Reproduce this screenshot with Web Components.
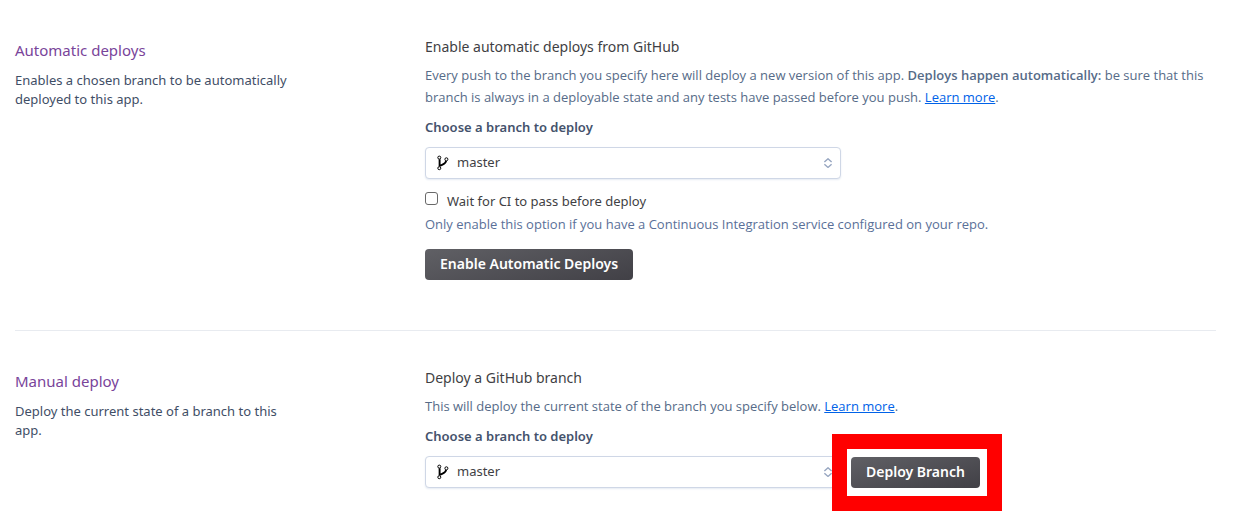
<!DOCTYPE html>
<html lang="en">
<head>
<meta charset="utf-8">
<title>Deploy</title>
<style>
  body { margin: 0; background: #fff; font-family: "Noto Sans", "Open Sans", sans-serif; font-size: 13px; color: #3f3f44; }
</style>
</head>
<body>
<deploy-page></deploy-page>

<script>
const define = (name, html) => {
  const template = document.createElement('template');
  template.innerHTML = html.trim();
  customElements.define(name, class extends HTMLElement {
    constructor() {
      super();
      this.attachShadow({ mode: 'open' }).append(template.content.cloneNode(true));
    }
  });
};

/* Two-column settings row: title and description on the left, controls on the right. */
define('deploy-section', `
  <style>
    :host { display: grid; grid-template-columns: minmax(0, 280px) minmax(0, 1fr); column-gap: 130px; padding: 36px 0 24px; }
    h2 { margin: 4px 0 11px; font-size: 15px; line-height: 20px; font-weight: 400; color: #79449a; }
    .about { font-size: 13px; line-height: 19px; color: #3f4e66; }
    h3 { margin: 0 0 6px; font-size: 14px; line-height: 22px; font-weight: 400; color: #3f3f44; }
    .body { font-size: 13px; line-height: 22px; color: #566b88; }
  </style>
  <aside><h2><slot name="title"></slot></h2><div class="about"><slot name="about"></slot></div></aside>
  <div><h3><slot name="heading"></slot></h3><div class="body"><slot></slot></div></div>
`);

define('text-link', `
  <style>
    :host { display: inline; }
    a { color: #0062e8; text-decoration: underline; }
  </style><a href="#"><slot></slot></a>
`);

define('branch-picker', `
  <style>
    :host { display: block; width: 416px; max-width: 100%; }
    label { display: block; margin-bottom: 9px; line-height: 22px; font-weight: 600; color: #44526c; }
    .field { position: relative; }
    select { display: block; box-sizing: border-box; width: 100%; height: 32px; margin: 0; padding: 0 30px 2px 31px;
      appearance: none; background: #fff; border: 1px solid #cfd7e6; border-radius: 4px;
      box-shadow: 0 1px 2px #e6ebf3; font: inherit; color: #3f3f44; }
    svg { position: absolute; pointer-events: none; fill: none; }
    .branch { left: 12px; top: 8px; }
    .arrows { right: 8px; top: 11px; }
  </style>
  <label for="branch">Choose a branch to deploy</label>
  <div class="field">
    <select id="branch"><option>master</option></select>
    <svg class="branch" width="12" height="16" viewBox="0 0 12 16" stroke="#000">
      <circle cx="2.3" cy="2.6" r="1.5"/><circle cx="2.3" cy="13.2" r="1.5"/><circle cx="9.4" cy="4.3" r="1.5"/>
      <path stroke-width="1.9" d="M2.6 4.3V11.6M9.1 6C8.8 8.9 6.2 9.2 3 10.8"/>
    </svg>
    <svg class="arrows" width="10" height="10" viewBox="0 0 10 10" stroke="#96a5c0" stroke-width="1.4">
      <path d="M1.4 4L5 .8 8.6 4M1.4 6.2L5 9.4 8.6 6.2"/>
    </svg>
  </div>
`);

define('check-option', `
  <style>
    :host { display: flex; align-items: flex-start; gap: 9px; color: #3f3f44; }
    input { box-sizing: border-box; width: 13px; height: 13px; margin: 2px 0 0; appearance: none; background: #fff; border: 1px solid #696969; border-radius: 3px; }
    input:checked { background: #79449a; }
    label { line-height: 22px; }
  </style>
  <input type="checkbox" id="box"><label for="box"><slot></slot></label>
`);

define('action-button', `
  <style>
    :host { display: inline-block; }
    button { display: block; height: 31px; margin: 0; padding: 0 15px 1px; border: 0; border-radius: 4px;
      background: linear-gradient(165deg, #606065, #414046); color: #fff; font: 600 14px/20px "Noto Sans", sans-serif; white-space: nowrap; }
  </style>
  <button type="button"><slot></slot></button>
`);

/* Red frame laid over whatever it wraps. */
define('highlight-frame', `
  <style>
    :host { display: block; position: relative; }
    .frame { position: absolute; inset: -23px -22px -23px -19px; border: 15px solid #f00; pointer-events: none; }
  </style>
  <slot></slot><div class="frame"></div>
`);

define('deploy-page', `
  <style>
    :host { display: block; padding: 0 30px 0 15px; }
    p { margin: 0; font-family: "Open Sans", "Noto Sans", sans-serif; }
    b { font-weight: 600; }
    branch-picker { margin-top: 8px; }
    check-option { margin-top: 11px; }
    .auto { padding-bottom: 50px; border-bottom: 1px solid #e8ebf0; }
    .note { margin-top: 1px; color: #5a7098; }
    .auto action-button { display: block; margin-top: 14px; }
    .row { display: flex; align-items: flex-end; gap: 10px; }
  </style>
  <deploy-section class="auto">
    <span slot="title">Automatic deploys</span>
    <span slot="about">Enables a chosen branch to be automatically deployed to this app.</span>
    <span slot="heading">Enable automatic deploys from GitHub</span>
    <p>Every push to the branch you specify here will deploy a new version of this app. <b>Deploys happen automatically:</b> be sure that this branch is always in a deployable state and any tests have passed before you push. <text-link>Learn more</text-link>.</p>
    <branch-picker></branch-picker>
    <check-option>Wait for CI to pass before deploy</check-option>
    <p class="note">Only enable this option if you have a Continuous Integration service configured on your repo.</p>
    <action-button>Enable Automatic Deploys</action-button>
  </deploy-section>
  <deploy-section>
    <span slot="title">Manual deploy</span>
    <span slot="about">Deploy the current state of a branch to this app.</span>
    <span slot="heading">Deploy a GitHub branch</span>
    <p>This will deploy the current state of the branch you specify below. <text-link>Learn more</text-link>.</p>
    <div class="row">
      <branch-picker></branch-picker>
      <highlight-frame><action-button>Deploy Branch</action-button></highlight-frame>
    </div>
  </deploy-section>
`);
</script>
</body>
</html>
